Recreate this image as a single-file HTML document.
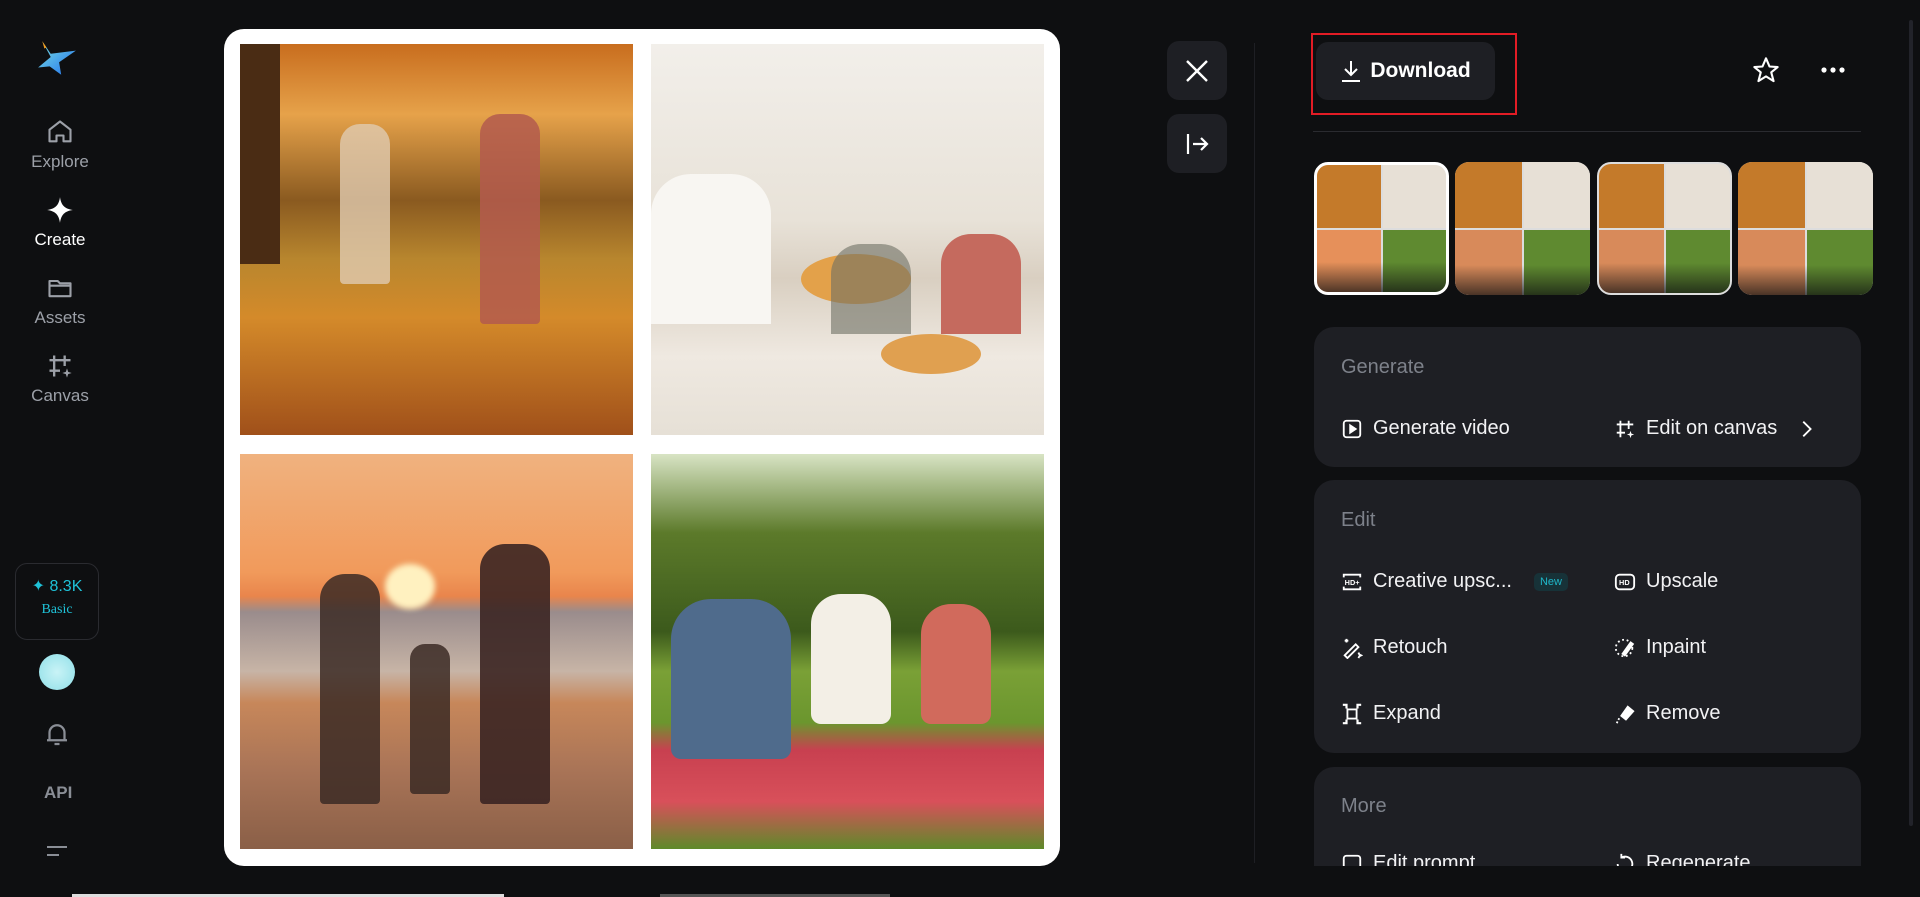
<!DOCTYPE html>
<html><head><meta charset="utf-8"><style>
*{margin:0;padding:0;box-sizing:border-box}
body{width:1920px;height:897px;background:#0e0f11;font-family:"Liberation Sans",sans-serif;position:relative;overflow:hidden;color:#fff}
.a{position:absolute}
.nav{position:absolute;left:0;width:120px;text-align:center;color:#9ca0a8;font-size:17px}
.nav svg{display:block;margin:0 auto 6px}
.card{position:absolute;left:1314px;width:547px;background:#1e1f24;border-radius:20px}
.ttl{position:absolute;left:27px;color:#7d818a;font-size:20px}
.it{position:absolute;font-size:20px;color:#f2f2f4;display:flex;align-items:center;gap:10px}
.it svg{width:22px;height:22px}
.img{position:absolute;overflow:hidden}
.th{position:absolute;top:162px;width:135px;height:133px;border-radius:14px;overflow:hidden;display:grid;grid-template-columns:1fr 1fr;grid-template-rows:1fr 1fr;gap:2px;background:#ddd}
.th::after{content:"";position:absolute;left:0;right:0;bottom:0;height:30px;background:linear-gradient(rgba(14,15,17,0),rgba(14,15,17,.7))}
</style></head><body>
<!-- logo -->
<svg class="a" style="left:36px;top:38px" width="42" height="40" viewBox="0 0 40 36"><defs><linearGradient id="lg" x1="0" y1="0" x2="1" y2="1"><stop offset="0" stop-color="#7de3e0"/><stop offset="1" stop-color="#1e6ff0"/></linearGradient></defs><path d="M6 2 L14 14 L38 11 L22 22 L24 34 L13 26 L2 27 L14 17 Z" fill="url(#lg)"/><path d="M6 2 L10 8 L8 9Z" fill="#f5a020"/></svg>
<div class="nav" style="top:118px"><svg width="28" height="28" viewBox="0 0 24 24" fill="none" stroke="#9ca0a8" stroke-width="1.8"><path d="M3 10 L12 3 L21 10 V20 H15 V15 H9 V20 H3Z" stroke-linejoin="round"/></svg>Explore</div>
<div class="nav" style="top:196px;color:#fff"><svg width="28" height="28" viewBox="0 0 24 24"><path d="M12 1 C13 8 16 11 23 12 C16 13 13 16 12 23 C11 16 8 13 1 12 C8 11 11 8 12 1Z" fill="#fff"/></svg>Create</div>
<div class="nav" style="top:274px"><svg width="28" height="28" viewBox="0 0 24 24" fill="none" stroke="#9ca0a8" stroke-width="1.8"><path d="M3 6 H10 L12 8 H21 V19 H3Z M3 10 H21" stroke-linejoin="round"/></svg>Assets</div>
<div class="nav" style="top:352px"><svg width="28" height="28" viewBox="0 0 24 24" fill="none" stroke="#9ca0a8" stroke-width="2"><path d="M7 3 V21 M16 3 V12 M3 7 H21 M3 16 H12"/><path d="M18 14 L19 17 L22 18 L19 19 L18 22 L17 19 L14 18 L17 17Z" fill="#9ca0a8" stroke="none"/></svg>Canvas</div>
<div class="a" style="left:15px;top:563px;width:84px;height:77px;border:1px solid #2a2b30;border-radius:12px;text-align:center;color:#1fc2d8"><div style="margin-top:12px;font-size:16px">✦ 8.3K</div><div style="font-family:'Liberation Serif',serif;font-size:14px;margin-top:6px">Basic</div></div>
<div class="a" style="left:39px;top:654px;width:36px;height:36px;border-radius:50%;background:radial-gradient(circle,#c9f3f6,#8fdfe8)"></div>
<svg class="a" style="left:42px;top:719px" width="30" height="30" viewBox="0 0 24 24" fill="none" stroke="#8a8e96" stroke-width="1.8"><path d="M6 17 V11 A6 6 0 0 1 18 11 V17 H20 H4 M10 20 H14"/></svg>
<div class="a" style="left:44px;top:783px;color:#8a8e96;font-weight:bold;font-size:17px">API</div>
<svg class="a" style="left:45px;top:844px" width="24" height="16"><path d="M2 3 H22 M2 11 H14" stroke="#8a8e96" stroke-width="2"/></svg>
<div class="a" style="left:72px;top:894px;width:432px;height:3px;background:#ddd"></div>
<div class="a" style="left:660px;top:894px;width:230px;height:3px;background:#555"></div>

<!-- main card -->
<div class="a" style="left:224px;top:29px;width:836px;height:837px;background:#fff;border-radius:20px"></div>
<div class="img" style="left:240px;top:44px;width:393px;height:391px;background:linear-gradient(180deg,#c86d1e 0%,#e6a24a 18%,#8a5a20 40%,#b8862e 55%,#d48a2a 70%,#a0501a 100%)">
<div class="a" style="left:100px;top:80px;width:50px;height:160px;background:#e0cbb0;border-radius:20px 20px 4px 4px;opacity:.8"></div>
<div class="a" style="left:240px;top:70px;width:60px;height:210px;background:#b35b4e;border-radius:20px 20px 4px 4px;opacity:.85"></div>
<div class="a" style="left:0;top:0;width:40px;height:220px;background:#4a2c14"></div></div>
<div class="img" style="left:651px;top:44px;width:393px;height:391px;background:linear-gradient(180deg,#f2efea 0%,#e8e2d8 45%,#d9cfc1 60%,#efe9e1 80%,#e6e0d6 100%)">
<div class="a" style="left:0;top:130px;width:120px;height:150px;background:#f8f6f2;border-radius:40px 40px 0 0"></div>
<div class="a" style="left:150px;top:210px;width:110px;height:50px;background:#e3a14a;border-radius:50%"></div>
<div class="a" style="left:180px;top:200px;width:80px;height:90px;background:#6e7064;border-radius:30px 30px 0 0;opacity:.6"></div>
<div class="a" style="left:290px;top:190px;width:80px;height:100px;background:#c56a5e;border-radius:30px 30px 0 0"></div>
<div class="a" style="left:230px;top:290px;width:100px;height:40px;background:#e0a050;border-radius:50%"></div></div>
<div class="img" style="left:240px;top:454px;width:393px;height:395px;background:linear-gradient(180deg,#f0b27f 0%,#f19a5b 30%,#e9854c 36%,#9a8c8c 40%,#c7b4a6 55%,#c7875a 63%,#a97457 80%,#8a5f47 100%)">
<div class="a" style="left:145px;top:110px;width:50px;height:45px;background:#fff1c0;border-radius:50%;filter:blur(3px)"></div>
<div class="a" style="left:80px;top:120px;width:60px;height:230px;background:#3b2a24;border-radius:25px 25px 4px 4px;opacity:.85"></div>
<div class="a" style="left:240px;top:90px;width:70px;height:260px;background:#3b2522;border-radius:25px 25px 4px 4px;opacity:.9"></div>
<div class="a" style="left:170px;top:190px;width:40px;height:150px;background:#3b2a24;border-radius:15px 15px 4px 4px;opacity:.85"></div></div>
<div class="img" style="left:651px;top:454px;width:393px;height:395px;background:linear-gradient(180deg,#d8e4c4 0%,#5c7a2a 20%,#3c5a1c 45%,#7aa036 55%,#6b962e 68%,#c84050 75%,#d8505a 88%,#5e8a2a 100%)">
<div class="a" style="left:20px;top:145px;width:120px;height:160px;background:#4f6b8c;border-radius:40px 40px 10px 10px"></div>
<div class="a" style="left:160px;top:140px;width:80px;height:130px;background:#f3efe6;border-radius:30px 30px 10px 10px"></div>
<div class="a" style="left:270px;top:150px;width:70px;height:120px;background:#d16a5c;border-radius:30px 30px 10px 10px"></div></div>

<!-- close/expand -->
<div class="a" style="left:1167px;top:41px;width:60px;height:59px;background:#1e1f24;border-radius:12px"><svg style="margin:17px" width="26" height="26"><path d="M3 3 L23 23 M23 3 L3 23" stroke="#fff" stroke-width="2.4"/></svg></div>
<div class="a" style="left:1167px;top:114px;width:60px;height:59px;background:#1e1f24;border-radius:12px"><svg style="margin:17px" width="26" height="26" fill="none" stroke="#fff" stroke-width="2.2"><path d="M4 3 V23 M9 13 H23 M17 7 L23 13 L17 19"/></svg></div>
<div class="a" style="left:1254px;top:43px;width:1px;height:820px;background:#1e1f24"></div>

<!-- header -->
<div class="a" style="left:1316px;top:42px;width:179px;height:58px;background:#1e1f24;border-radius:12px;display:flex;align-items:center;justify-content:center;gap:8px;font-weight:bold;font-size:21px"><svg width="22" height="24" fill="none" stroke="#fff" stroke-width="2"><path d="M11 2 V16 M5 10 L11 16 L17 10 M2 22 H20"/></svg>Download</div>
<div class="a" style="left:1311px;top:33px;width:206px;height:82px;border:2px solid #e21c25"></div>
<svg class="a" style="left:1752px;top:56px" width="28" height="28" viewBox="0 0 24 24" fill="none" stroke="#fff" stroke-width="1.8" stroke-linejoin="round"><path d="M12 2 L15 9 L22 9.5 L16.5 14 L18.5 21.5 L12 17.5 L5.5 21.5 L7.5 14 L2 9.5 L9 9Z"/></svg>
<svg class="a" style="left:1820px;top:64px" width="26" height="12"><circle cx="4" cy="6" r="2.6" fill="#fff"/><circle cx="13" cy="6" r="2.6" fill="#fff"/><circle cx="22" cy="6" r="2.6" fill="#fff"/></svg>
<div class="a" style="left:1313px;top:131px;width:548px;height:1px;background:#2a2b30"></div>

<!-- thumbnails -->
<div class="th" style="left:1314px;border:3px solid #fff"><div style="background:#c47a2a"></div><div style="background:#e7e0d6"></div><div style="background:#e6905a"></div><div style="background:#5f8a30"></div></div>
<div class="th" style="left:1455px"><div style="background:#c47a2a"></div><div style="background:#e7e0d6"></div><div style="background:#d88a5a"></div><div style="background:#5f8a30"></div></div>
<div class="th" style="left:1597px;border:2px solid #ddd"><div style="background:#c47a2a"></div><div style="background:#e7e0d6"></div><div style="background:#d88a5a"></div><div style="background:#5f8a30"></div></div>
<div class="th" style="left:1738px"><div style="background:#c47a2a"></div><div style="background:#e7e0d6"></div><div style="background:#d88a5a"></div><div style="background:#5f8a30"></div></div>

<!-- Generate -->
<div class="card" style="top:327px;height:140px">
<div class="ttl" style="top:29px">Generate</div>
<div class="it" style="left:27px;top:90px"><svg viewBox="0 0 24 24" fill="none" stroke="#fff" stroke-width="2"><rect x="3" y="3" width="18" height="18" rx="3"/><path d="M10 8 L16 12 L10 16Z" fill="#fff"/></svg>Generate video</div>
<div class="it" style="left:300px;top:90px"><svg viewBox="0 0 24 24" fill="none" stroke="#fff" stroke-width="2"><path d="M7 3 V21 M16 3 V12 M3 7 H21 M3 16 H12"/><path d="M18 14 L19 17 L22 18 L19 19 L18 22 L17 19 L14 18 L17 17Z" fill="#fff" stroke="none"/></svg>Edit on canvas<svg style="margin-left:8px" viewBox="0 0 24 24" fill="none" stroke="#fff" stroke-width="2"><path d="M9 4 L17 12 L9 20"/></svg></div>
</div>
<!-- Edit -->
<div class="card" style="top:480px;height:273px">
<div class="ttl" style="top:29px">Edit</div>
<div class="it" style="left:27px;top:90px"><svg viewBox="0 0 24 24" fill="none" stroke="#fff" stroke-width="2"><path d="M3 7 V4 H21 V7 M3 17 V20 H21 V17"/><text x="4" y="15" font-size="8" fill="#fff" stroke="none" font-weight="bold" font-family="Liberation Sans">HD+</text></svg>Creative upsc...<span style="font-size:11px;color:#1fb7c9;background:#173238;border-radius:5px;padding:3px 6px;margin-left:12px">New</span></div>
<div class="it" style="left:300px;top:90px"><svg viewBox="0 0 24 24" fill="none" stroke="#fff" stroke-width="2"><rect x="2" y="4" width="20" height="16" rx="4"/><text x="5.5" y="15.5" font-size="8" fill="#fff" stroke="none" font-weight="bold" font-family="Liberation Sans">HD</text></svg>Upscale</div>
<div class="it" style="left:27px;top:156px"><svg viewBox="0 0 24 24" fill="none" stroke="#fff" stroke-width="2"><path d="M4 20 L16 8 L19 11 L7 23 Z M6 2 V6 M4 4 H8 M19 17 L20 19 L22 20 L20 21 L19 23"/></svg>Retouch</div>
<div class="it" style="left:300px;top:156px"><svg viewBox="0 0 24 24" fill="none" stroke="#fff" stroke-width="2" stroke-dasharray="2 3"><circle cx="11" cy="12" r="9"/><path d="M10 20 L20 6" stroke-dasharray="none" stroke-width="5"/></svg>Inpaint</div>
<div class="it" style="left:27px;top:222px"><svg viewBox="0 0 24 24" fill="none" stroke="#fff" stroke-width="2"><rect x="7" y="7" width="10" height="10"/><path d="M2 2 H6 V6 M22 2 H18 V6 M2 22 H6 V18 M22 22 H18 V18" stroke-width="2.4"/></svg>Expand</div>
<div class="it" style="left:300px;top:222px"><svg viewBox="0 0 24 24" fill="none" stroke="#fff" stroke-width="2"><path d="M8 14 L15 4 L21 9 L13 18Z" fill="#fff"/><path d="M3 22 L6 16" stroke-dasharray="2 2"/></svg>Remove</div>
</div>
<!-- More -->
<div class="card" style="top:767px;height:99px;border-radius:20px 20px 0 0;overflow:hidden">
<div class="ttl" style="top:28px">More</div>
<div class="it" style="left:27px;top:85px"><svg viewBox="0 0 24 24" fill="none" stroke="#fff" stroke-width="2"><rect x="3" y="3" width="18" height="18" rx="3"/></svg>Edit prompt</div>
<div class="it" style="left:300px;top:85px"><svg viewBox="0 0 24 24" fill="none" stroke="#fff" stroke-width="2"><path d="M4 12 A8 8 0 1 0 8 5 M8 1 V5 H12"/></svg>Regenerate</div>
</div>
<div class="a" style="left:1909px;top:20px;width:4px;height:806px;background:#22232a;border-radius:2px"></div>
</body></html>
